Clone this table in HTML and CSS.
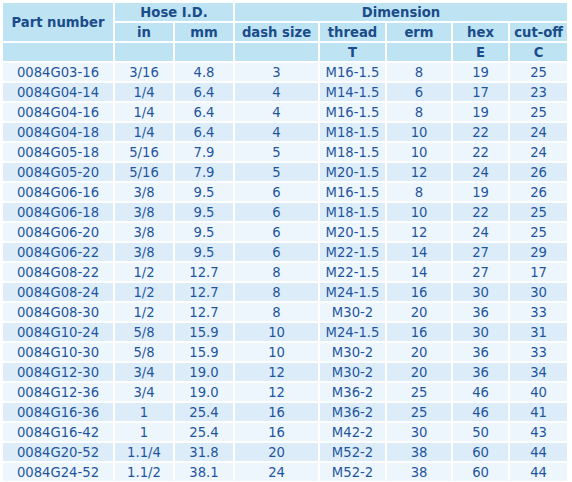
FILE: index.html
```html
<!DOCTYPE html>
<html>
<head>
<meta charset="utf-8">
<link rel="stylesheet" href="styles.css">
</head>
<body>
<table class="spec">
  <colgroup>
    <col class="c-part"><col class="c-in"><col class="c-mm"><col class="c-dash"><col class="c-thread"><col class="c-erm"><col class="c-hex"><col class="c-cut">
  </colgroup>
  <thead>
    <tr><th rowspan="2">Part number</th><th colspan="2">Hose I.D.</th><th colspan="5">Dimension</th></tr>
    <tr><th>in</th><th>mm</th><th>dash size</th><th>thread</th><th>erm</th><th>hex</th><th>cut-off</th></tr>
    <tr><th></th><th></th><th></th><th></th><th>T</th><th></th><th>E</th><th>C</th></tr>
  </thead>
  <tbody>
    <tr><td>0084G03-16</td><td>3/16</td><td>4.8</td><td>3</td><td>M16-1.5</td><td>8</td><td>19</td><td>25</td></tr>
    <tr><td>0084G04-14</td><td>1/4</td><td>6.4</td><td>4</td><td>M14-1.5</td><td>6</td><td>17</td><td>23</td></tr>
    <tr><td>0084G04-16</td><td>1/4</td><td>6.4</td><td>4</td><td>M16-1.5</td><td>8</td><td>19</td><td>25</td></tr>
    <tr><td>0084G04-18</td><td>1/4</td><td>6.4</td><td>4</td><td>M18-1.5</td><td>10</td><td>22</td><td>24</td></tr>
    <tr><td>0084G05-18</td><td>5/16</td><td>7.9</td><td>5</td><td>M18-1.5</td><td>10</td><td>22</td><td>24</td></tr>
    <tr><td>0084G05-20</td><td>5/16</td><td>7.9</td><td>5</td><td>M20-1.5</td><td>12</td><td>24</td><td>26</td></tr>
    <tr><td>0084G06-16</td><td>3/8</td><td>9.5</td><td>6</td><td>M16-1.5</td><td>8</td><td>19</td><td>26</td></tr>
    <tr><td>0084G06-18</td><td>3/8</td><td>9.5</td><td>6</td><td>M18-1.5</td><td>10</td><td>22</td><td>25</td></tr>
    <tr><td>0084G06-20</td><td>3/8</td><td>9.5</td><td>6</td><td>M20-1.5</td><td>12</td><td>24</td><td>25</td></tr>
    <tr><td>0084G06-22</td><td>3/8</td><td>9.5</td><td>6</td><td>M22-1.5</td><td>14</td><td>27</td><td>29</td></tr>
    <tr><td>0084G08-22</td><td>1/2</td><td>12.7</td><td>8</td><td>M22-1.5</td><td>14</td><td>27</td><td>17</td></tr>
    <tr><td>0084G08-24</td><td>1/2</td><td>12.7</td><td>8</td><td>M24-1.5</td><td>16</td><td>30</td><td>30</td></tr>
    <tr><td>0084G08-30</td><td>1/2</td><td>12.7</td><td>8</td><td>M30-2</td><td>20</td><td>36</td><td>33</td></tr>
    <tr><td>0084G10-24</td><td>5/8</td><td>15.9</td><td>10</td><td>M24-1.5</td><td>16</td><td>30</td><td>31</td></tr>
    <tr><td>0084G10-30</td><td>5/8</td><td>15.9</td><td>10</td><td>M30-2</td><td>20</td><td>36</td><td>33</td></tr>
    <tr><td>0084G12-30</td><td>3/4</td><td>19.0</td><td>12</td><td>M30-2</td><td>20</td><td>36</td><td>34</td></tr>
    <tr><td>0084G12-36</td><td>3/4</td><td>19.0</td><td>12</td><td>M36-2</td><td>25</td><td>46</td><td>40</td></tr>
    <tr><td>0084G16-36</td><td>1</td><td>25.4</td><td>16</td><td>M36-2</td><td>25</td><td>46</td><td>41</td></tr>
    <tr><td>0084G16-42</td><td>1</td><td>25.4</td><td>16</td><td>M42-2</td><td>30</td><td>50</td><td>43</td></tr>
    <tr><td>0084G20-52</td><td>1.1/4</td><td>31.8</td><td>20</td><td>M52-2</td><td>38</td><td>60</td><td>44</td></tr>
    <tr><td>0084G24-52</td><td>1.1/2</td><td>38.1</td><td>24</td><td>M52-2</td><td>38</td><td>60</td><td>44</td></tr>
  </tbody>
</table>
</body>
</html>
```
FILE: styles.css
```css
html, body {
  margin: 0;
  padding: 0;
  background: #ffffff;
}
body {
  padding: 1px;
  font-family: "DejaVu Sans", Verdana, sans-serif;
  font-size: 13.2px;
}
.spec {
  table-layout: fixed;
  border-collapse: separate;
  border-spacing: 2px;
  width: 568px;
}
.c-part { width: 110px; }
.c-in { width: 58px; }
.c-mm { width: 58px; }
.c-dash { width: 83px; }
.c-thread { width: 65px; }
.c-erm { width: 64px; }
.c-hex { width: 55px; }
.c-cut { width: 57px; }
.spec th, .spec td {
  box-sizing: border-box;
  padding: 2px 0 0 0;
  height: 18px;
  text-align: center;
  vertical-align: middle;
  line-height: 16px;
  white-space: nowrap;
}
.spec th {
  background: #bee3f3;
  color: #1b4c8a;
  font-weight: bold;
}
.spec td {
  color: #1f55a0;
}
.spec tbody tr:nth-child(odd) td { background: #eef6fd; }
.spec tbody tr:nth-child(even) td { background: #dcedf9; }
```
